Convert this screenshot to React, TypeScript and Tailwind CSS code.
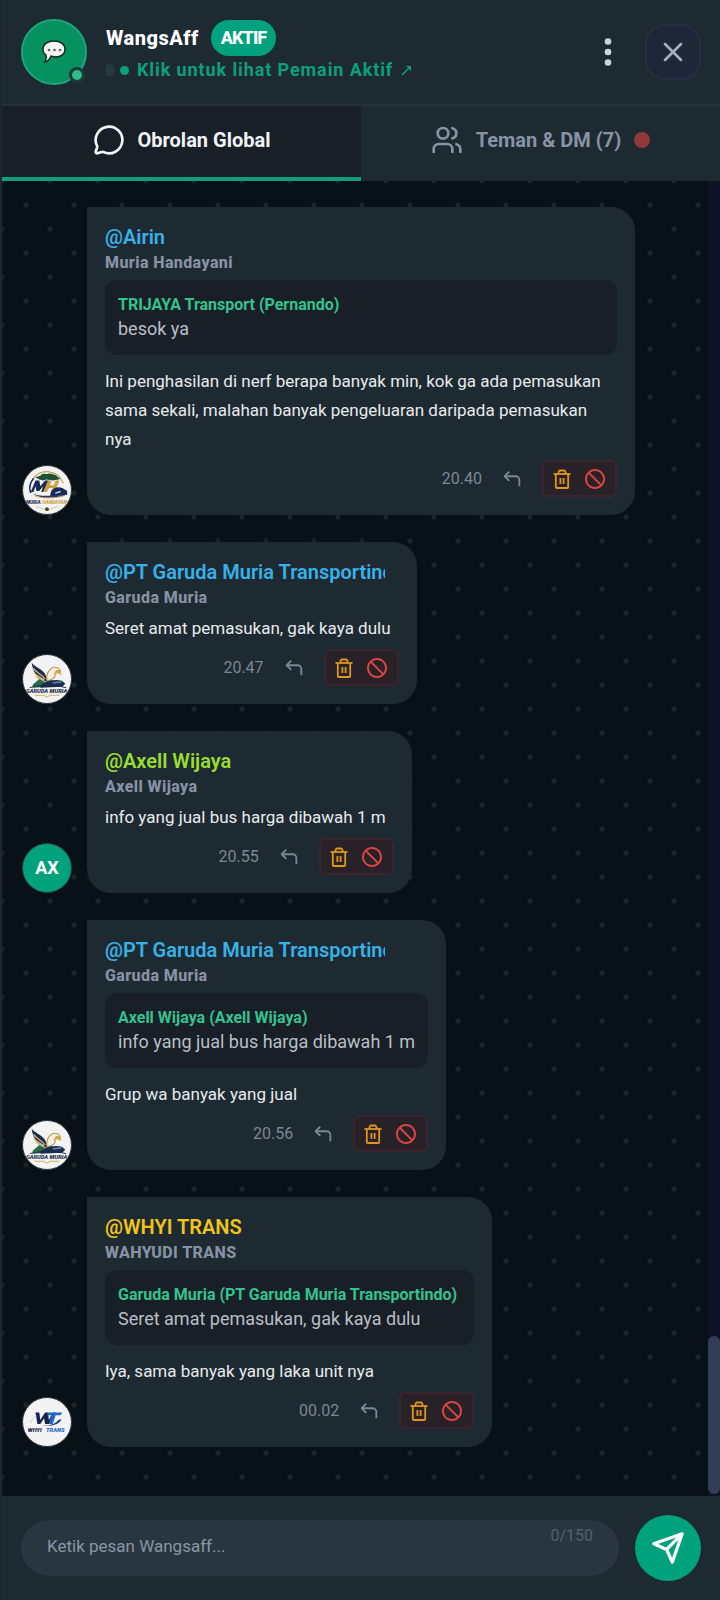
import { ReactNode } from 'react';
import { CornerUpLeft, MessageCircle, Users, X } from 'lucide-react';
import { RiProhibitedLine } from 'react-icons/ri';

type Quote = { author: string; text: string };

type Message = {
  id: number;
  handle: string;
  name: string;
  color: 'sky' | 'lime' | 'yellow';
  avatar: ReactNode;
  quote?: Quote;
  text: string;
  time: string;
};

const HANDLE_COLOR: Record<Message['color'], string> = {
  sky:    'text-[#38b0e8]',
  lime:   'text-[#9bdc31]',
  yellow: 'text-[#f0c419]',
};

function MuriaLogo() {
  return (
    <svg viewBox="0 0 50 50" className="w-full h-full" role="img" aria-label="Muria Handayani">
      <path d="M10 14A18 18 0 0 1 42 18" fill="none" stroke="#c9a458" strokeWidth="1.2" />
      <path d="M8 28A15 15 0 0 1 11 13" fill="none" stroke="#1b2b57" strokeWidth="1.6" />
      <path d="M13 12c2-2 5-1 6-3 3-2 5 0 7-1 3-1 5 1 7 1 2 0 3 3 6 4-2 2-5 1-7 2l-8-1-3 1-4-1z" fill="#1d5136" />
      <path d="M8 27l5-12h4l1 6 5-6h4l-4 12h-4l2-6-4 5h-3l-1-5-2 6z" fill="#1b2b57" />
      <path d="M26 15h4l-2 5h4l2-5h4l-5 12h-4l2-4h-4l-2 4h-4z" fill="#cf9f45" />
      <path d="M29 27c2-4 7-6 12-4l5 3v4l-9 1-9 1z" fill="#1b2b57" />
      <path d="M33 28l5-2 2 1-6 2z" fill="#dfe4ec" />
      <path d="M10 28c4 3 13 4 35 2-10 4-29 5-35-2z" fill="#23386d" />
      <path d="M12 31c8 3 20 3 31 0" fill="none" stroke="#c9a458" strokeWidth="1" />
      <text x="3" y="40" fontSize="5" fontWeight="900" fontStyle="italic" fill="#1b2b57">MURIA</text>
      <text x="20" y="40" fontSize="5" fontWeight="900" fontStyle="italic" fill="#cf9f45">HANDAYANI</text>
      <path d="M13 42l12 4 12-4" fill="none" stroke="#d9c391" strokeWidth="1" />
      <circle cx="25" cy="45" r="2" fill="#4b452f" />
    </svg>
  );
}

function GarudaLogo() {
  return (
    <svg viewBox="0 0 50 50" className="w-full h-full" role="img" aria-label="Garuda Muria">
      <path d="M9 8c5 6 13 7 15 14l3 7-7-3c-6-3-10-10-11-18z" fill="#1c2c4c" />
      <path d="M11 14c3 5 9 6 12 11M11 18c3 4 7 5 11 8M13 22c3 3 6 4 9 5" fill="none" stroke="#d8bd81" strokeWidth="1.3" />
      <path d="M25 27c-1-6 1-12 6-14 4-1 8 1 8 4-3-1-5 0-6 2 2 4-2 7-8 8z" fill="#f7efdd" stroke="#b99a5a" strokeWidth="1.2" />
      <path d="M34 16c3-1 6 1 6 5-1-1-3-2-6-2z" fill="#d9a443" />
      <path d="M10 31l7-6 6 3 6-2 5 2-7 5-17 1z" fill="#2a6b4c" />
      <path d="M19 31c7-5 16-6 22-4l3 3-3 3-23 1z" fill="#1c2c4c" />
      <path d="M31 28l8-1 2 2-10 1z" fill="#5b78a6" />
      <path d="M7 34c11-3 25-3 38 0" fill="none" stroke="#1c2c4c" strokeWidth="1" />
      <text x="3" y="40" fontSize="6" fontWeight="900" fontStyle="italic" fill="#1c2c4c">GARUDA MURIA</text>
      <path d="M12 42h10l3 2 3-2h10" fill="none" stroke="#d8bd81" strokeWidth="1.2" />
    </svg>
  );
}

function WhyiLogo() {
  return (
    <svg viewBox="0 0 50 50" className="w-full h-full" role="img" aria-label="Whyi Trans">
      <path d="M13 15h4l1 8 5-8h3l1 8 4-8h3l-7 12h-4l-1-6-4 6h-3z" fill="#14254c" />
      <path d="M26 15h15l-2 3h-5l-3 9h-4l3-9h-5z" fill="#2468c6" />
      <path d="M20 29c8 0 14-2 17-6l3-1c-1 5-9 8-20 7z" fill="#1a3f86" />
      <path d="M8 26c1-4 3-6 6-7" fill="none" stroke="#c9d2df" strokeWidth="1" />
      <text x="5" y="35" fontSize="6" fontWeight="900" fontStyle="italic" fill="#14254c">WHYI</text>
      <text x="24" y="35" fontSize="6" fontWeight="900" fontStyle="italic" fill="#2468c6">TRANS</text>
    </svg>
  );
}

function TrashIcon() {
  return (
    <svg width="20" height="20" viewBox="0 0 20 20" fill="none" stroke="currentColor" strokeWidth="1.8" strokeLinejoin="round" aria-hidden="true">
      <path d="M1.500 5h17" />
      <path d="M6.500 5V3l1-1.500h5l1 1.500v2" />
      <path d="M3.800 5v13a1 1 0 0 0 1 1h10.400a1 1 0 0 0 1-1V5" />
      <path d="M8.400 9v6M11.600 9v6" />
    </svg>
  );
}

function SendIcon() {
  return (
    <svg width="34" height="34" viewBox="0 0 24 24" fill="none" stroke="currentColor" strokeWidth="2.3" strokeLinejoin="round" aria-hidden="true">
      <path d="M22 2l-7 20-4-9-9-4z" />
      <path d="M22 2L11 13" />
    </svg>
  );
}

const MESSAGES: Message[] = [
  {
    id: 1, handle: '@Airin', name: 'Muria Handayani', color: 'sky', avatar: <MuriaLogo />,
    quote: { author: 'TRIJAYA Transport (Pernando)', text: 'besok ya' },
    text: 'Ini penghasilan di nerf berapa banyak min, kok ga ada pemasukan sama sekali, malahan banyak pengeluaran daripada pemasukan nya',
    time: '20.40',
  },
  {
    id: 2, handle: '@PT Garuda Muria Transportindo', name: 'Garuda Muria', color: 'sky', avatar: <GarudaLogo />,
    text: 'Seret amat pemasukan, gak kaya dulu', time: '20.47',
  },
  {
    id: 3, handle: '@Axell Wijaya', name: 'Axell Wijaya', color: 'lime', avatar: 'AX',
    text: 'info yang jual bus harga dibawah 1 m', time: '20.55',
  },
  {
    id: 4, handle: '@PT Garuda Muria Transportindo', name: 'Garuda Muria', color: 'sky', avatar: <GarudaLogo />,
    quote: { author: 'Axell Wijaya (Axell Wijaya)', text: 'info yang jual bus harga dibawah 1 m' },
    text: 'Grup wa banyak yang jual', time: '20.56',
  },
  {
    id: 5, handle: '@WHYI TRANS', name: 'WAHYUDI TRANS', color: 'yellow', avatar: <WhyiLogo />,
    quote: { author: 'Garuda Muria (PT Garuda Muria Transportindo)', text: 'Seret amat pemasukan, gak kaya dulu' },
    text: 'Iya, sama banyak yang laka unit nya', time: '00.02',
  },
];

function ChatBubble({ message }: { message: Message }) {
  const initials = typeof message.avatar === 'string';

  return (
    <li className="flex items-end gap-[15px]">
      <div className={`w-[50px] h-[50px] shrink-0 rounded-full overflow-hidden border border-[#2b3944] flex items-center justify-center text-lg font-bold text-white ${
        initials ? 'bg-[#00a17d]' : 'bg-[#f3f3f3]'
      }`}>
        {message.avatar}
      </div>
      <article className="max-w-[548px] min-w-0 bg-[#1e2a31] rounded-3xl rounded-tl-none p-[18px]">
        <h2 className={`max-w-[280px] overflow-hidden whitespace-nowrap text-xl leading-6 font-semibold ${HANDLE_COLOR[message.color]}`}>
          {message.handle}
        </h2>
        <p className="mt-0.5 text-base leading-6 font-extrabold tracking-wide text-[#8792a6]">{message.name}</p>
        {message.quote && (
          <blockquote className="mt-[5px] mb-3 p-[13px] rounded-xl bg-[#181f26]">
            <p className="pr-1 text-base leading-6 font-bold text-[#34c38f]">{message.quote.author}</p>
            <p className="text-lg leading-6 pb-px text-[#b9bfc6]">{message.quote.text}</p>
          </blockquote>
        )}
        <p className={`pr-2 text-[17px] leading-[29px] text-[#e6eaed] ${message.quote ? '' : 'mt-1'}`}>{message.text}</p>
        <div className="mt-1.5 flex items-center justify-end gap-[19px]">
          <time className="text-base text-[#7b8696]">{message.time}</time>
          <button type="button" aria-label="Balas" className="text-[#7b8696]">
            <CornerUpLeft size={22} strokeWidth={2} strokeLinecap="butt" />
          </button>
          <div className="h-[37px] px-2 flex items-center gap-[11px] rounded-md border-2 border-[#3c242a] bg-[#282228]">
            <button type="button" aria-label="Hapus" className="text-[#e0961c]">
              <TrashIcon />
            </button>
            <button type="button" aria-label="Blokir" className="text-[#dc4444]">
              <RiProhibitedLine size={24} />
            </button>
          </div>
        </div>
      </article>
    </li>
  );
}

function Header() {
  return (
    <header className="h-[106px] px-[19px] flex items-center gap-[19px] border-b-2 border-[#24313a]">
      <div className="relative w-[66px] h-[66px] shrink-0 rounded-full border-2 border-[#1da678] bg-[#059160] flex items-center justify-center">
        <svg width="26" height="26" viewBox="0 0 26 26" aria-hidden="true">
          <path d="M13 2c6 0 11 3 11 8s-4 8-10 8l-4-1c-1 3-3 5-6 6 1-2 2-4 1-7-2-1-3-3-3-6 0-5 5-8 11-8z" fill="#f5f5f5" stroke="#14271f" strokeWidth="1.4" />
          <circle cx="8" cy="11" r="1.3" fill="#56646c" />
          <circle cx="13.500" cy="11" r="1.3" fill="#56646c" />
          <circle cx="19" cy="11" r="1.3" fill="#56646c" />
        </svg>
        <span className="absolute right-0 bottom-0 w-4 h-4 rounded-full border-[3px] border-[#1e3a38] bg-[#2dbd87]" />
      </div>
      <div className="flex-1 min-w-0">
        <div className="flex items-center gap-3">
          <h1 className="text-xl font-extrabold tracking-wide text-white">WangsAff</h1>
          <span className="h-9 px-2.5 flex items-center rounded-full bg-[#00a17d] text-lg font-extrabold tracking-tighter text-white">AKTIF</span>
        </div>
        <a href="#pemain" className="h-7 flex items-center text-lg leading-6 font-bold tracking-wider text-[#0d9f7c]">
          <span className="w-[9px] h-3 rounded-r-md bg-[#243a3d]" />
          <span className="ml-[5px] mr-2 w-[9px] h-[9px] rounded-full bg-[#0d9f7c]" />
          Klik untuk lihat Pemain Aktif
          <svg className="ml-2" width="12" height="12" viewBox="0 0 12 12" aria-hidden="true">
            <path d="M1 11l7-7" stroke="currentColor" strokeWidth="1.500" />
            <path d="M5 2h5v5z" fill="currentColor" />
          </svg>
        </a>
      </div>
      <button type="button" aria-label="Menu" className="mr-1.5 p-2 text-[#cbd5e0]">
        <svg width="8" height="30" viewBox="0 0 8 30" fill="currentColor" aria-hidden="true">
          <circle cx="4" cy="4.500" r="3.3" />
          <circle cx="4" cy="15" r="3.3" />
          <circle cx="4" cy="25.500" r="3.3" />
        </svg>
      </button>
      <button type="button" aria-label="Tutup" className="w-14 h-14 flex items-center justify-center rounded-[20px] border-2 border-[#262f42] bg-[#1e2638] text-[#a3adbc]">
        <X size={32} strokeWidth={2} />
      </button>
    </header>
  );
}

export default function App() {
  return (
    <div className="min-h-screen flex flex-col border-l-2 border-[#1d2637] bg-[#1e2a32] font-[Roboto,'Noto_Sans',sans-serif]">
      <Header />

      <nav className="h-[75px] grid grid-cols-2 text-xl font-bold">
        <button type="button" className="flex items-center justify-center gap-[13px] pb-1 border-b-4 border-[#0f9f7c] bg-[#181f27] text-[#f1f4f6]">
          <MessageCircle size={32} strokeWidth={2} />
          Obrolan Global
        </button>
        <button type="button" className="flex items-center justify-center gap-[13px] pb-1 border-b-4 border-transparent text-[#8793a6]">
          <Users size={32} strokeWidth={2} />
          Teman &amp; DM (7)
          <span className="w-4 h-4 rounded-full bg-[#8f393c]" />
        </button>
      </nav>

      <main className="flex-1 flex bg-[#091118]">
        <ul className="flex-1 min-w-0 flex flex-col gap-[27px] pt-[26px] pb-12 px-5 bg-[radial-gradient(circle,#1b242b_2px,transparent_3px),radial-gradient(circle,#1b242b_2px,transparent_3px)] bg-[size:48px_48px] bg-[position:0_0,24px_24px]">
          {MESSAGES.map((message) => (
            <ChatBubble key={message.id} message={message} />
          ))}
        </ul>
        <div className="w-3 pb-0.5 flex flex-col justify-end bg-[#0e1426]" aria-hidden="true">
          <div className="h-[12%] rounded-full bg-[#323e55]" />
        </div>
      </main>

      <form className="h-[104px] px-[19px] flex items-center gap-4" onSubmit={(e) => e.preventDefault()}>
        <div className="relative flex-1 min-w-0">
          <input
            type="text"
            aria-label="Pesan"
            placeholder="Ketik pesan Wangsaff..."
            maxLength={150}
            className="w-full h-14 pl-[26px] pr-24 pb-1 rounded-full bg-[#293640] text-[17px] text-white placeholder:text-[#8996a6] outline-none"
          />
          <span className="absolute right-[26px] top-1 text-base leading-6 text-[#526070]">0/150</span>
        </div>
        <button type="submit" aria-label="Kirim" className="w-[66px] h-[66px] shrink-0 flex items-center justify-center rounded-full bg-[#00a17d] text-white">
          <SendIcon />
        </button>
      </form>
    </div>
  );
}
